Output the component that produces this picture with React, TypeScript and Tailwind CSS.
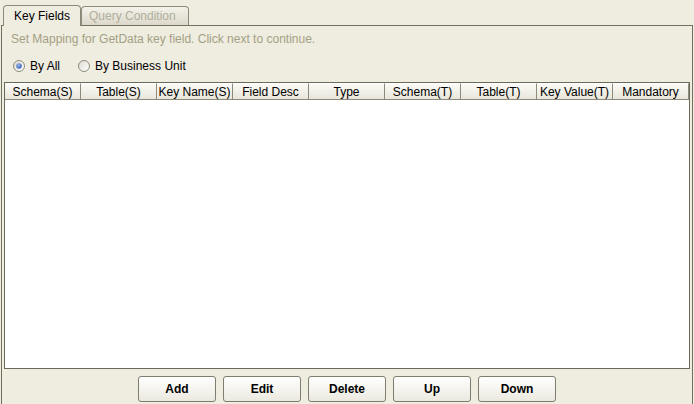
import React from "react";

const cols = [
  "Schema(S)",
  "Table(S)",
  "Key Name(S)",
  "Field Desc",
  "Type",
  "Schema(T)",
  "Table(T)",
  "Key Value(T)",
  "Mandatory",
];

const buttons = ["Add", "Edit", "Delete", "Up", "Down"];

function Radio({ checked }: { checked: boolean }) {
  return (
    <svg width="12" height="12" viewBox="0 0 12 12" className="shrink-0">
      <defs>
        <linearGradient id={checked ? "rg1" : "rg2"} x1="0" y1="0" x2="1" y2="1">
          <stop offset="0" stopColor="#dcdad0" />
          <stop offset="1" stopColor="#ffffff" />
        </linearGradient>
        <radialGradient id="dot" cx="0.4" cy="0.35" r="0.7">
          <stop offset="0" stopColor="#9fb8e8" />
          <stop offset="1" stopColor="#2f5cb8" />
        </radialGradient>
      </defs>
      <circle cx="6" cy="6" r="5.5" fill={`url(#${checked ? "rg1" : "rg2"})`} stroke="#8c8c7c" strokeWidth="1" />
      {checked && <circle cx="6" cy="6" r="2.8" fill="url(#dot)" />}
    </svg>
  );
}

export default function App() {
  return (
    <div
      className="w-[694px] h-[404px] bg-[#efece0] flex flex-col overflow-hidden text-[12px] text-black"
      style={{ fontFamily: '"Liberation Sans", Arial, sans-serif' }}
    >
      {/* tabs */}
      <div className="flex items-end h-[25px] pl-[3px]">
        <div className="relative z-10 h-[21px] w-[78px] mb-[-1px] bg-[#efece0] border border-b-0 border-[#8c8a78] rounded-t-[4px] pl-[10px] pt-[2px] leading-[16px]">
          Key Fields
        </div>
        <div className="h-[19px] w-[108px] bg-gradient-to-b from-[#f4f2ea] to-[#dcd9cb] border border-b-0 border-[#8c8a78] rounded-t-[4px] pl-[7px] leading-[18px] text-[#b0ae9c]">
          Query Condition
        </div>
      </div>
      {/* panel */}
      <div className="flex-1 flex flex-col border-t border-l border-r border-[#72705f] ml-[1px] mr-[1px]">
        <div className="h-[25px] pl-[9px] pt-[6px] leading-[14px] text-[#a3a184]">
          Set Mapping for GetData key field. Click next to continue.
        </div>
        <div className="h-[31px] flex items-center pl-[11px] pb-[2px]">
          <div className="flex items-center gap-[5px]">
            <Radio checked={true} />
            <span>By All</span>
          </div>
          <div className="flex items-center gap-[5px] ml-[18px]">
            <Radio checked={false} />
            <span>By Business Unit</span>
          </div>
        </div>
        {/* table */}
        <div className="h-[287px] mx-[2px] border border-[#6a6a5a] bg-white flex flex-col">
          <div className="flex h-[17px] overflow-hidden">
            {cols.map((c, i) => (
              <div
                key={c}
                className={`${i === cols.length - 1 ? "flex-1 min-w-0" : "w-[76px] shrink-0"} h-[17px] flex items-center justify-center bg-gradient-to-b from-[#fbfaf6] to-[#e8e6da] border-r border-b border-[#8c8a7a] border-t border-t-white leading-[14px] pt-[1px] whitespace-nowrap`}
              >
                {c}
              </div>
            ))}
          </div>
          <div className="flex-1 bg-white" />
        </div>
        {/* buttons */}
        <div className="flex justify-center gap-[7px] pt-[7px]">
          {buttons.map((b) => (
            <button
              key={b}
              className="w-[78px] h-[26px] rounded-[3px] border border-[#7f7d70] bg-gradient-to-b from-white to-[#ebe9df] font-bold text-[12px] leading-[14px] flex items-center justify-center"
            >
              {b}
            </button>
          ))}
        </div>
      </div>
    </div>
  );
}
